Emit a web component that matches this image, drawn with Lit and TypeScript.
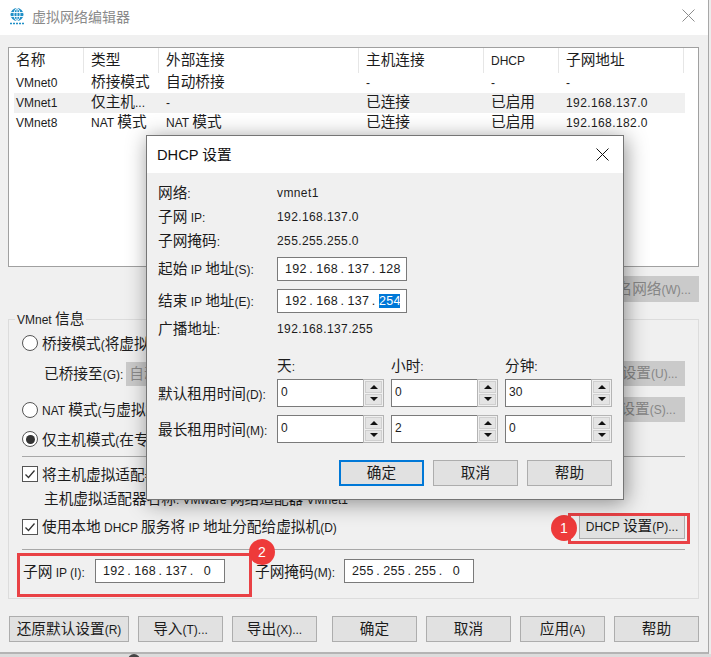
import { LitElement, html, css } from "lit";
import { customElement } from "lit/decorators.js";

const t = (s: string) =>
  html`<span class="t">${(s.match(/[\x00-\x7f]+|[^\x00-\x7f]+/g) || []).map((p) =>
    /^[\x00-\x7f]/.test(p) ? html`<span class="l">${p}</span>` : html`<span>${p}</span>`
  )}</span>`;

const ip = (parts: string[], sel = -1) => html`<div class="ip">
  ${parts.map(
    (p, i) => html`${i > 0 ? html`<span class="dot">.</span>` : ""}<span class="seg ${i === sel ? "sel" : ""}">${p}</span>`
  )}
</div>`;

const spin = (v: string) => html`<div class="spin">
  <div class="spin-val">${v}</div>
  <div class="spin-btns">
    <div class="sb"><i class="up"></i></div>
    <div class="sb"><i class="down"></i></div>
  </div>
</div>`;

const checkBox = html`<span class="check"><svg width="14" height="14" viewBox="0 0 14 14"><path d="M2.5 7.5 L5.5 10.5 L11.5 3.5" fill="none" stroke="#333" stroke-width="1.3"/></svg></span>`;

const rows = [
  ["VMnet0", "桥接模式", "自动桥接", "-", "-", "-"],
  ["VMnet1", "仅主机...", "-", "已连接", "已启用", "192.168.137.0"],
  ["VMnet8", "NAT 模式", "NAT 模式", "已连接", "已启用", "192.168.182.0"],
];

@customElement("app-root")
export class AppRoot extends LitElement {
  static styles = css`
    :host {
      display: flex;
      flex-direction: column;
      width: 711px;
      height: 657px;
      position: relative;
      overflow: hidden;
      background: #ececec;
      font-family: "Noto Sans CJK SC", "Liberation Sans", sans-serif;
      font-size: 14.67px;
      color: #1c1c1c;
      line-height: 1;
    }
    .t { white-space: pre; }
    .l { font-family: "Liberation Sans", sans-serif; font-size: 12px; }
    .window {
      width: 708px;
      background: #f0f0f0;
      border-right: 1px solid #a8a8a8;
      border-bottom: 2px solid #b4b4b4;
      box-sizing: content-box;
      height: 652px;
      display: flex;
      flex-direction: column;
    }
    .strip { height: 3px; padding-left: 128px; overflow: hidden; background: #dcdcdc; }
    .strip i { display: block; width: 12px; height: 12px; border-radius: 50%; background: #444; }
    .titlebar {
      height: 35px;
      background: #fff;
      display: flex;
      align-items: center;
      padding: 0 13px 4px 9px;
      color: #8a8a8a;
      font-size: 14px;
      flex: none;
      box-sizing: border-box;
    }
    .titlebar .name { margin-left: 7px; flex: 1; }
    .body { padding: 12px 9px 0 8px; }
    .table {
      width: 691px;
      height: 220px;
      box-sizing: border-box;
      border: 1px solid #a0a0a0;
      background: #fff;
    }
    .tr { display: grid; grid-template-columns: 75px 75px 200px 125px 75px 125px; height: 20px; align-items: center; }
    .tr.head { height: 25px; align-items: stretch; }
    .tr.head > div { display: flex; align-items: center; border-right: 1px solid #e6e6e6; padding-bottom: 2px; box-sizing: border-box; }
    .tr > div { padding-left: 7px; padding-bottom: 3px; white-space: nowrap; box-sizing: border-box; }
    .tr > div:nth-child(6) .l { letter-spacing: 0.4px; }
    .tr.head > div:nth-child(6) .l { letter-spacing: 0; }
    .tr.alt { background: linear-gradient(to right, #fff 5px, #f0f0f0 5px); width: 676px; }
    .rename-row { display: flex; justify-content: flex-end; margin-top: 9px; }
    .btn {
      display: flex;
      align-items: center;
      justify-content: center;
      box-sizing: border-box;
      height: 26px;
      width: 85px;
      padding-bottom: 2px;
      background: #e1e1e1;
      border: 1px solid #adadad;
      white-space: nowrap;
      flex: none;
    }
    .btn.off { background: #cacaca; border-color: #cacaca; color: #868686; }
    .btn.w119 { width: 119px; }
    .btn.w120 { width: 120px; }
    .btn.w106 { width: 106px; height: 25px; }
    .btn.wset { width: 100px; height: 25px; }
    .group {
      position: relative;
      margin-top: 17px;
      width: 691px;
      height: 280px;
      box-sizing: border-box;
      border: 1px solid #dcdcdc;
      padding: 11px 13px 0 13px;
    }
    .legend { position: absolute; left: 6px; top: -10px; background: #f0f0f0; padding: 0 2px; line-height: 16px; }
    .row { display: flex; align-items: center; white-space: nowrap; }
    .row.between { justify-content: space-between; }
    .radio {
      width: 16px; height: 16px; border-radius: 50%; box-sizing: border-box;
      border: 1px solid #555; background: #fff; margin-right: 4px; flex: none;
      display: flex; align-items: center; justify-content: center;
    }
    .radio i { width: 9px; height: 9px; border-radius: 50%; background: #333; }
    .check {
      width: 16px; height: 16px; box-sizing: border-box; border: 1px solid #555; background: #fff;
      margin-right: 4px; flex: none; display: flex; align-items: center; justify-content: center;
    }
    .r1 { height: 24px; }
    .r2 { height: 25px; margin-top: 6px; padding-left: 22px; }
    .r3 { height: 25px; margin-top: 11px; }
    .r4 { height: 22px; margin-top: 6px; }
    .sep { height: 1px; background: #a8a8a8; }
    .sep.s1 { margin-top: 6px; }
    .r5 { height: 22px; margin-top: 6px; }
    .r6 { height: 22px; margin-top: 2px; padding-left: 22px; }
    .r7 { height: 25px; margin-top: 5px; }
    .sep.s2 { margin-top: 10px; }
    .r8 { height: 24px; margin-top: 9px; }
    .select {
      margin-left: 3px; width: 120px; height: 24px; background: #cacaca; color: #8a8a8a;
      display: flex; align-items: center; padding-left: 3px;
    }
    .bridge { display: flex; align-items: center; }
    .ipbox {
      width: 130px; height: 24px; box-sizing: border-box; border: 1px solid #7a7a7a; background: #fff;
      display: flex; align-items: center; padding-left: 7px; flex: none;
    }
    .ip { display: flex; align-items: center; font-family: "Liberation Sans", sans-serif; font-size: 12.5px; letter-spacing: 0.3px; }
    .seg { width: 21px; text-align: center; }
    .seg.sel { background: #0078d7; color: #fff; height: 14px; line-height: 14px; }
    .dot { width: 10.3px; text-align: center; }
    .lab1 { width: 73px; padding-left: 1px; box-sizing: border-box; flex: none; }
    .lab2 { width: 89px; margin-left: 30px; flex: none; }
    .footer { display: flex; margin-top: 17px; padding-left: 1px; }
    .footer .btn { margin-right: 9px; }
    .footer .gap { margin-right: 15px; }
    .footer .btn:last-child { margin-right: 0; }

    /* overlays */
    .frame { position: absolute; box-sizing: border-box; border: 3px solid #e94145; }
    .f1 { left: 568px; top: 513px; width: 122px; height: 31px; }
    .f2 { left: 17px; top: 553px; width: 235px; height: 44px; }
    .badge {
      position: absolute; width: 26px; height: 26px; border-radius: 50%; background: #ee3a3a; color: #fff;
      display: flex; align-items: center; justify-content: center;
      font: 14px "Liberation Sans", sans-serif;
    }
    .b1 { left: 551px; top: 515px; }
    .b2 { left: 249px; top: 539px; }

    .dialog {
      position: absolute;
      left: 146px;
      top: 135px;
      width: 478px;
      height: 365px;
      box-sizing: border-box;
      border: 1px solid #757575;
      background: #f0f0f0;
      box-shadow: 2px 3px 20px rgba(0, 0, 0, 0.42);
      display: flex;
      flex-direction: column;
    }
    .dtitle {
      height: 37px; background: #fff; flex: none; display: flex; align-items: center;
      padding: 0 14px 0 10px; box-sizing: border-box; color: #111;
    }
    .dtitle .name { flex: 1; }
    .dtitle .l { font-size: 14.67px; }
    .dbody { padding: 8px 11px 0 11px; flex: 1; }
    .drow { display: flex; align-items: center; height: 24px; white-space: nowrap; }
    .drow .k { width: 119px; flex: none; padding-bottom: 2px; box-sizing: border-box; }
    .drow .v { font-size: 12px; font-family: "Liberation Sans", sans-serif; letter-spacing: 0.4px; }
    .d4 { margin-top: 4px; }
    .d5 { margin-top: 8px; }
    .d6 { margin-top: 4px; }
    .heads { display: flex; padding-left: 119px; margin-top: 12px; height: 24px; align-items: center; }
    .heads div { width: 114px; flex: none; }
    .spinrow { display: flex; align-items: center; height: 28px; white-space: nowrap; }
    .spinrow .k { width: 119px; flex: none; }
    .spinrow.one { margin-top: 2px; }
    .spinrow.two { margin-top: 8px; }
    .spin {
      width: 107px; height: 28px; box-sizing: border-box; margin-right: 7px; flex: none;
      display: flex; background: #fff; border: 1px solid #7a7a7a; border-right: none;
    }
    .spin-val { flex: 1; padding: 5px 0 0 3px; font: 12px "Liberation Sans", sans-serif; }
    .spin-btns {
      width: 21px; margin: -1px 0; box-sizing: border-box; border: 1px solid #b4b4b4; background: #f0f0f0;
      padding: 1px; display: flex; flex-direction: column; gap: 1px;
    }
    .sb { flex: 1; background: #e4e4e4; border: 1px solid #cfcfcf; display: flex; align-items: center; justify-content: center; }
    .up { width: 0; height: 0; border-left: 4px solid transparent; border-right: 4px solid transparent; border-bottom: 4px solid #111; }
    .down { width: 0; height: 0; border-left: 4px solid transparent; border-right: 4px solid transparent; border-top: 4px solid #111; }
    .dfoot { display: flex; padding-left: 181px; gap: 9px; margin-top: 17px; }
    .btn.primary { border: 2px solid #0078d7; }
  `;

  render() {
    return html`
      <div class="window">
        <div class="titlebar">
          <svg width="16" height="18" viewBox="0 0 16 18">
            <circle cx="8" cy="7.5" r="6.5" fill="#1f8fc7"/>
            <g fill="none" stroke="#fff" stroke-width="0.9">
              <ellipse cx="8" cy="7.5" rx="3" ry="6"/>
              <path d="M1.5 5.5H14.5M1.5 9.5H14.5M8 1.5V13.5"/>
            </g>
            <path d="M1 16.5H15" stroke="#1f8fc7" stroke-width="1.5" stroke-dasharray="2 1"/>
          </svg>
          <span class="name">虚拟网络编辑器</span>
          <svg width="13" height="13" viewBox="0 0 13 13"><path d="M.5.5 12.5 12.5M12.5.5.5 12.5" stroke="#8c8c8c" fill="none"/></svg>
        </div>
        <div class="body">
          <div class="table">
            <div class="tr head">
              ${["名称", "类型", "外部连接", "主机连接", "DHCP", "子网地址"].map((h) => html`<div>${t(h)}</div>`)}
            </div>
            ${rows.map(
              (r, i) => html`<div class="tr ${i === 1 ? "alt" : ""}">${r.map((c) => html`<div>${t(c)}</div>`)}</div>`
            )}
          </div>
          <div class="rename-row"><div class="btn off w119">${t("重命名网络(W)...")}</div></div>
          <div class="group">
            <div class="legend">${t("VMnet 信息")}</div>
            <div class="row r1"><span class="radio"></span>${t("桥接模式(将虚拟机")}</div>
            <div class="row r2 between">
              <div class="bridge">${t("已桥接至(G):")}<div class="select">自动</div></div>
              <div class="btn off wset">${t("自动设置(U)...")}</div>
            </div>
            <div class="row r3 between">
              <div class="bridge"><span class="radio"></span>${t("NAT 模式(与虚拟机")}</div>
              <div class="btn off wset">${t("NAT 设置(S)...")}</div>
            </div>
            <div class="row r4"><span class="radio"><i></i></span>${t("仅主机模式(在专用")}</div>
            <div class="sep s1"></div>
            <div class="row r5">${checkBox}${t("将主机虚拟适配器")}</div>
            <div class="row r6">${t("主机虚拟适配器名称: VMware 网络适配器 VMnet1")}</div>
            <div class="row r7 between">
              <div class="bridge">${checkBox}${t("使用本地 DHCP 服务将 IP 地址分配给虚拟机(D)")}</div>
              <div class="btn w106">${t("DHCP 设置(P)...")}</div>
            </div>
            <div class="sep s2"></div>
            <div class="row r8">
              <div class="lab1">${t("子网 IP (I):")}</div>
              <div class="ipbox">${ip(["192", "168", "137", "0"])}</div>
              <div class="lab2">${t("子网掩码(M):")}</div>
              <div class="ipbox">${ip(["255", "255", "255", "0"])}</div>
            </div>
          </div>
          <div class="footer">
            <div class="btn w120">${t("还原默认设置(R)")}</div>
            <div class="btn">${t("导入(T)...")}</div>
            <div class="btn gap">${t("导出(X)...")}</div>
            <div class="btn">确定</div>
            <div class="btn">取消</div>
            <div class="btn">${t("应用(A)")}</div>
            <div class="btn">帮助</div>
          </div>
        </div>
      </div>
      <div class="strip"><i></i></div>

      <div class="frame f1"></div>
      <div class="frame f2"></div>
      <div class="badge b1">1</div>
      <div class="badge b2">2</div>

      <div class="dialog">
        <div class="dtitle">
          <span class="name">${t("DHCP 设置")}</span>
          <svg width="13" height="13" viewBox="0 0 13 13"><path d="M.5.5 12.5 12.5M12.5.5.5 12.5" stroke="#111" fill="none"/></svg>
        </div>
        <div class="dbody">
          <div class="drow"><div class="k">${t("网络:")}</div><div class="v">vmnet1</div></div>
          <div class="drow"><div class="k">${t("子网 IP:")}</div><div class="v">192.168.137.0</div></div>
          <div class="drow"><div class="k">${t("子网掩码:")}</div><div class="v">255.255.255.0</div></div>
          <div class="drow d4"><div class="k">${t("起始 IP 地址(S):")}</div><div class="ipbox">${ip(["192", "168", "137", "128"])}</div></div>
          <div class="drow d5"><div class="k">${t("结束 IP 地址(E):")}</div><div class="ipbox">${ip(["192", "168", "137", "254"], 3)}</div></div>
          <div class="drow d6"><div class="k">${t("广播地址:")}</div><div class="v">192.168.137.255</div></div>
          <div class="heads"><div>${t("天:")}</div><div>${t("小时:")}</div><div>${t("分钟:")}</div></div>
          <div class="spinrow one"><div class="k">${t("默认租用时间(D):")}</div>${spin("0")}${spin("0")}${spin("30")}</div>
          <div class="spinrow two"><div class="k">${t("最长租用时间(M):")}</div>${spin("0")}${spin("2")}${spin("0")}</div>
          <div class="dfoot">
            <div class="btn primary">确定</div>
            <div class="btn">取消</div>
            <div class="btn">帮助</div>
          </div>
        </div>
      </div>
    `;
  }
}
